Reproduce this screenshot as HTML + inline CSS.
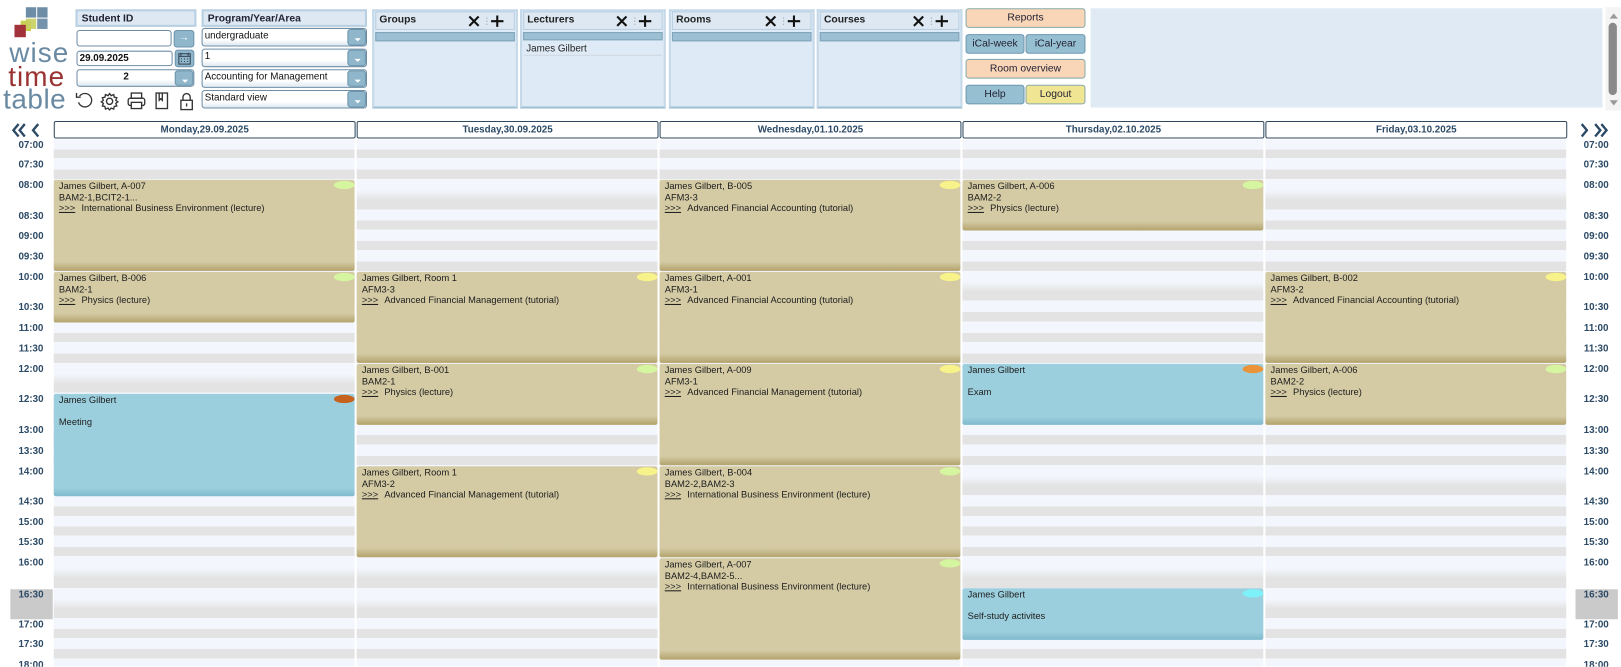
<!DOCTYPE html>
<html><head><meta charset="utf-8">
<style>
*{box-sizing:border-box;margin:0;padding:0}
html,body{width:1621px;height:667px;overflow:hidden;background:#fff}
#w{position:absolute;left:0;top:0;width:1568px;height:645px;overflow:hidden;transform:scale(1.03380);transform-origin:0 0;font-family:"Liberation Sans",Arial,sans-serif;color:#222}
.a{position:absolute}
.hd{position:absolute;background:#dde8f3;border:2px solid #b8d0e2;font-weight:bold;font-size:10px;padding:2px 4px;color:#223}
.in{position:absolute;background:#fff;border:1px solid #6f8ea6;border-radius:3px;font-size:9.5px;padding:1px 2px;color:#111}
.bt{position:absolute;background:#8fb6ca;border:1px solid #6c95ad;border-radius:3px}
.dd{position:absolute;right:0;top:0;bottom:0;width:18px;background:#8fb6ca;border:1px solid #6c95ad;border-radius:3px}
.dd:after{content:"";position:absolute;left:6px;top:8px;border-left:3px solid transparent;border-right:3px solid transparent;border-top:3px solid #fff}
.pn{position:absolute;top:9px;width:141px;height:96px;background:#deeaf5;border:2px solid #c5d9e8;border-bottom-color:#9fc0d3}
.pn .t{position:absolute;left:1px;top:0;right:1px;height:18px;border:1px solid #b8d0e2;background:#dde8f3;font-weight:bold;font-size:10px;padding:2px 3px}
.pn svg{position:absolute;right:3px;top:2px}
.pn .bar{position:absolute;left:1px;right:1px;top:20px;height:9px;background:#9cbfd3;border:1px solid #7fa4bb}
.b2{position:absolute;border:1px solid #8aa;border-radius:3px;font-size:10px;text-align:center;line-height:17px;color:#223}
.dh{position:absolute;top:117px;height:17px;background:#fff;border:1px solid #2f4a60;border-radius:2px;font-size:9.5px;font-weight:bold;color:#2c4a66;text-align:center;line-height:15px}
.tl{position:absolute;width:40px;text-align:center;font-size:9.5px;font-weight:bold;color:#2c4a66}
.r{position:absolute;left:52px;width:1463px}
.r20{background:linear-gradient(#f3f7fd 0 50%,#e3e3e3 50% 95%,#f3f7fd 95%)}
.r30{background:linear-gradient(#f3f7fd 0 33%,#e3e3e3 66%,#e3e3e3 96%,#f3f7fd 96%)}
.vl{position:absolute;top:135px;height:510px;width:2px;background:#fff}
.e{position:absolute;width:291px;background:linear-gradient(#d4cba5 0,#d4cba5 calc(100% - 9px),#b3a36c 100%);font-size:9px;line-height:10.5px;padding:1px 5px;color:#1c1c1c;border-radius:2px}
.e.b{background:linear-gradient(#9ccfdd 0,#9ccfdd calc(100% - 8px),#7fb9cc 100%)}
.e i{font-style:normal;text-decoration:underline;margin-right:6px}
.e .d{position:absolute;right:0;top:1px;width:20px;height:8px;border-radius:50%}
</style></head><body><div id="w">

<!-- logo -->
<div class="a" style="left:25px;top:7px;width:10px;height:10px;background:#6d8ca6"></div>
<div class="a" style="left:36px;top:7px;width:10px;height:10px;background:#6d8ca6"></div>
<div class="a" style="left:36px;top:18px;width:10px;height:10px;background:#7593ad"></div>
<div class="a" style="left:20px;top:20px;width:10px;height:10px;background:#c9cf4e"></div>
<div class="a" style="left:25px;top:18px;width:10px;height:10px;background:#c6cf60;opacity:.9"></div>
<div class="a" style="left:14px;top:24px;width:11px;height:12px;background:#a3333a"></div>
<div class="a" style="left:9px;top:39px;font-size:27px;line-height:24px;color:#6a8aa3;letter-spacing:1px">wise</div>
<div class="a" style="left:8px;top:62px;font-size:27px;line-height:24px;color:#9a3232;letter-spacing:1px">time</div>
<div class="a" style="left:3px;top:84px;font-size:27px;line-height:24px;color:#6a8aa3;letter-spacing:0.5px">table</div>

<!-- student -->
<div class="hd" style="left:73px;top:9px;width:117px;height:17px">Student ID</div>
<div class="in" style="left:74px;top:29px;width:92px;height:16px"></div>
<div class="bt" style="left:168px;top:29px;width:20px;height:17px;color:#fff;font-size:10px;text-align:center;line-height:14px">&#8594;</div>
<div class="in" style="left:74px;top:49px;width:93px;height:15px;font-weight:bold;line-height:11px">29.09.2025</div>
<div class="bt" style="left:169px;top:48px;width:19px;height:17px"><svg width="17" height="15" viewBox="0 0 17 15"><rect x="3" y="3" width="11" height="10" fill="none" stroke="#345" stroke-width="1"/><path d="M3 5.5h11M5 2v3M12 2v3M5 8h1M8 8h1M11 8h1M5 10.5h1M8 10.5h1M11 10.5h1" stroke="#345"/></svg></div>
<div class="in" style="left:74px;top:67px;width:114px;height:17px;font-weight:bold;text-align:center;padding-right:20px;background:linear-gradient(#fff 60%,#dde8f0)">2<div class="dd"></div></div>
<svg class="a" style="left:72px;top:87px" width="120" height="20" viewBox="0 0 120 20" fill="none" stroke="#333" stroke-width="1.3">
<path d="M5 6a6.5 6.5 0 1 1 -1 6"/><path d="M2 3v4h4"/>
<circle cx="34" cy="11" r="3"/><path d="M34 3.5l1.5 2 2.5-1 .5 2.5 2.5.5-1 2.5 2 1.5-2 1.5 1 2.5-2.5.5-.5 2.5-2.5-1-1.5 2-1.5-2-2.5 1-.5-2.5-2.5-.5 1-2.5-2-1.5 2-1.5-1-2.5 2.5-.5.5-2.5 2.5 1z"/>
<rect x="55" y="3" width="10" height="5"/><rect x="52" y="8" width="16" height="7" rx="2"/><rect x="55" y="12" width="10" height="6" fill="#fff"/>
<rect x="79" y="3" width="11" height="15"/><path d="M82 3v7l1.5-1.5L85 10V3"/>
<rect x="103" y="10" width="11" height="9"/><path d="M105 10V7a3.5 3.5 0 0 1 7 0v3M108.5 13v3"/>
</svg>

<!-- program -->
<div class="hd" style="left:195px;top:9px;width:160px;height:17px">Program/Year/Area</div>
<div class="in" style="left:195px;top:27px;width:160px;height:18px;padding-right:20px;line-height:12px;background:linear-gradient(#fff 65%,#dde8f0)">undergraduate<div class="dd"></div></div>
<div class="in" style="left:195px;top:47px;width:160px;height:18px;line-height:12px;background:linear-gradient(#fff 65%,#dde8f0)">1<div class="dd"></div></div>
<div class="in" style="left:195px;top:67px;width:160px;height:18px;line-height:12px;background:linear-gradient(#fff 65%,#dde8f0)">Accounting for Management<div class="dd"></div></div>
<div class="in" style="left:195px;top:87px;width:160px;height:18px;line-height:12px;background:linear-gradient(#fff 65%,#dde8f0)">Standard view<div class="dd"></div></div>

<!-- panels -->
<div class="pn" style="left:360px"><div class="t">Groups<svg width="42" height="13" viewBox="0 0 42 13" stroke="#111" stroke-width="2"><path d="M2 2l9 9M11 2l-9 9M29 1v11M23 6.5h12"/><path d="M19 3v1M19 6v1M19 9v1" stroke="#999" stroke-width="1"/></svg></div><div class="bar"></div></div>
<div class="pn" style="left:503px"><div class="t">Lecturers<svg width="42" height="13" viewBox="0 0 42 13" stroke="#111" stroke-width="2"><path d="M2 2l9 9M11 2l-9 9M29 1v11M23 6.5h12"/><path d="M19 3v1M19 6v1M19 9v1" stroke="#999" stroke-width="1"/></svg></div><div class="bar" style="height:8px"></div><div class="a" style="left:2px;top:30px;right:2px;height:13px;border-bottom:1px solid #cfd8df;font-size:9.5px;padding:1px 2px">James Gilbert</div></div>
<div class="pn" style="left:647px"><div class="t">Rooms<svg width="42" height="13" viewBox="0 0 42 13" stroke="#111" stroke-width="2"><path d="M2 2l9 9M11 2l-9 9M29 1v11M23 6.5h12"/><path d="M19 3v1M19 6v1M19 9v1" stroke="#999" stroke-width="1"/></svg></div><div class="bar"></div></div>
<div class="pn" style="left:790px"><div class="t">Courses<svg width="42" height="13" viewBox="0 0 42 13" stroke="#111" stroke-width="2"><path d="M2 2l9 9M11 2l-9 9M29 1v11M23 6.5h12"/><path d="M19 3v1M19 6v1M19 9v1" stroke="#999" stroke-width="1"/></svg></div><div class="bar"></div></div>

<!-- buttons -->
<div class="b2" style="left:934px;top:8px;width:116px;height:19px;background:#fad6b8">Reports</div>
<div class="b2" style="left:934px;top:33px;width:57px;height:19px;background:#97bfd2;border-color:#6d97ae">iCal-week</div>
<div class="b2" style="left:992px;top:33px;width:58px;height:19px;background:#97bfd2;border-color:#6d97ae">iCal-year</div>
<div class="b2" style="left:934px;top:57px;width:116px;height:19px;background:#fad6b8">Room overview</div>
<div class="b2" style="left:934px;top:82px;width:57px;height:19px;background:#97bfd2;border-color:#6d97ae">Help</div>
<div class="b2" style="left:992px;top:82px;width:58px;height:19px;background:#f0e592">Logout</div>
<div class="a" style="left:1055px;top:8px;width:495px;height:96px;background:#dfeaf4"></div>
<div class="a" style="left:1553px;top:7px;width:15px;height:100px;background:#f4f4f4"></div>
<div class="a" style="left:1556px;top:22px;width:8px;height:70px;background:#8a8a8a;border-radius:4px"></div>
<div class="a" style="left:1557px;top:13px;border-left:4px solid transparent;border-right:4px solid transparent;border-bottom:5px solid #999"></div>
<div class="a" style="left:1557px;top:97px;border-left:4px solid transparent;border-right:4px solid transparent;border-top:5px solid #999"></div>

<!-- nav -->
<svg class="a" style="left:11px;top:119px" width="30" height="14" viewBox="0 0 30 14" fill="none" stroke="#2c4a66" stroke-width="2.3"><path d="M7 1L2 7l5 6M13 1L8 7l5 6M26 1l-5 6 5 6"/></svg>
<svg class="a" style="left:1527px;top:119px" width="30" height="14" viewBox="0 0 30 14" fill="none" stroke="#2c4a66" stroke-width="2.3"><path d="M3 1l5 6-5 6M16 1l5 6-5 6M22 1l5 6-5 6"/></svg>

<div class="dh" style="left:52px;width:292px">Monday,29.09.2025</div>
<div class="dh" style="left:345px;width:292px">Tuesday,30.09.2025</div>
<div class="dh" style="left:638px;width:292px">Wednesday,01.10.2025</div>
<div class="dh" style="left:931px;width:292px">Thursday,02.10.2025</div>
<div class="dh" style="left:1224px;width:292px">Friday,03.10.2025</div>

<!-- grid rows -->
<div class="r r20" style="top:135px;height:19px"></div>
<div class="r r20" style="top:154px;height:20px"></div>
<div class="r r30" style="top:174px;height:30px"></div>
<div class="r r20" style="top:204px;height:19px"></div>
<div class="r r20" style="top:223px;height:20px"></div>
<div class="r r20" style="top:243px;height:20px"></div>
<div class="r r30" style="top:263px;height:29px"></div>
<div class="r r20" style="top:292px;height:20px"></div>
<div class="r r20" style="top:312px;height:20px"></div>
<div class="r r20" style="top:332px;height:20px"></div>
<div class="r r30" style="top:352px;height:29px"></div>
<div class="r r30" style="top:381px;height:30px"></div>
<div class="r r20" style="top:411px;height:20px"></div>
<div class="r r20" style="top:431px;height:20px"></div>
<div class="r r30" style="top:451px;height:29px"></div>
<div class="r r20" style="top:480px;height:20px"></div>
<div class="r r20" style="top:500px;height:19px"></div>
<div class="r r20" style="top:519px;height:20px"></div>
<div class="r r30" style="top:539px;height:31px"></div>
<div class="r r30" style="top:570px;height:29px"></div>
<div class="r r20" style="top:599px;height:19px"></div>
<div class="r r20" style="top:618px;height:20px"></div>
<div class="r" style="top:638px;height:7px;background:#f3f7fd"></div>
<div class="vl" style="left:343px"></div><div class="vl" style="left:636px"></div><div class="vl" style="left:929px"></div><div class="vl" style="left:1222px"></div>

<!-- time labels -->
<div class="a" style="left:10px;top:570px;width:41px;height:29px;background:#cacaca"></div>
<div class="a" style="left:1524px;top:570px;width:41px;height:29px;background:#cacaca"></div>
<div style="position:absolute;left:10px;top:0">
<div class="tl" style="top:135px">07:00</div><div class="tl" style="top:154px">07:30</div><div class="tl" style="top:174px">08:00</div><div class="tl" style="top:204px">08:30</div><div class="tl" style="top:223px">09:00</div><div class="tl" style="top:243px">09:30</div><div class="tl" style="top:263px">10:00</div><div class="tl" style="top:292px">10:30</div><div class="tl" style="top:312px">11:00</div><div class="tl" style="top:332px">11:30</div><div class="tl" style="top:352px">12:00</div><div class="tl" style="top:381px">12:30</div><div class="tl" style="top:411px">13:00</div><div class="tl" style="top:431px">13:30</div><div class="tl" style="top:451px">14:00</div><div class="tl" style="top:480px">14:30</div><div class="tl" style="top:500px">15:00</div><div class="tl" style="top:519px">15:30</div><div class="tl" style="top:539px">16:00</div><div class="tl" style="top:570px">16:30</div><div class="tl" style="top:599px">17:00</div><div class="tl" style="top:618px">17:30</div><div class="tl" style="top:638px">18:00</div>
</div>
<div style="position:absolute;left:1524px;top:0">
<div class="tl" style="top:135px">07:00</div><div class="tl" style="top:154px">07:30</div><div class="tl" style="top:174px">08:00</div><div class="tl" style="top:204px">08:30</div><div class="tl" style="top:223px">09:00</div><div class="tl" style="top:243px">09:30</div><div class="tl" style="top:263px">10:00</div><div class="tl" style="top:292px">10:30</div><div class="tl" style="top:312px">11:00</div><div class="tl" style="top:332px">11:30</div><div class="tl" style="top:352px">12:00</div><div class="tl" style="top:381px">12:30</div><div class="tl" style="top:411px">13:00</div><div class="tl" style="top:431px">13:30</div><div class="tl" style="top:451px">14:00</div><div class="tl" style="top:480px">14:30</div><div class="tl" style="top:500px">15:00</div><div class="tl" style="top:519px">15:30</div><div class="tl" style="top:539px">16:00</div><div class="tl" style="top:570px">16:30</div><div class="tl" style="top:599px">17:00</div><div class="tl" style="top:618px">17:30</div><div class="tl" style="top:638px">18:00</div>
</div>

<!-- events Monday -->
<div class="e" style="left:52px;top:174px;height:88px"><div class="d" style="background:#d6f5a0"></div>James Gilbert, A-007<br>BAM2-1,BCIT2-1...<br><i>&gt;&gt;&gt;</i>International Business Environment (lecture)</div>
<div class="e" style="left:52px;top:263px;height:49px"><div class="d" style="background:#d6f5a0"></div>James Gilbert, B-006<br>BAM2-1<br><i>&gt;&gt;&gt;</i>Physics (lecture)</div>
<div class="e b" style="left:52px;top:381px;height:99px"><div class="d" style="background:#c6621e"></div>James Gilbert<br><br>Meeting</div>
<!-- Tuesday -->
<div class="e" style="left:345px;top:263px;height:88px"><div class="d" style="background:#f7f28a"></div>James Gilbert, Room 1<br>AFM3-3<br><i>&gt;&gt;&gt;</i>Advanced Financial Management (tutorial)</div>
<div class="e" style="left:345px;top:352px;height:59px"><div class="d" style="background:#d6f5a0"></div>James Gilbert, B-001<br>BAM2-1<br><i>&gt;&gt;&gt;</i>Physics (lecture)</div>
<div class="e" style="left:345px;top:451px;height:88px"><div class="d" style="background:#f7f28a"></div>James Gilbert, Room 1<br>AFM3-2<br><i>&gt;&gt;&gt;</i>Advanced Financial Management (tutorial)</div>
<!-- Wednesday -->
<div class="e" style="left:638px;top:174px;height:88px"><div class="d" style="background:#f7f28a"></div>James Gilbert, B-005<br>AFM3-3<br><i>&gt;&gt;&gt;</i>Advanced Financial Accounting (tutorial)</div>
<div class="e" style="left:638px;top:263px;height:88px"><div class="d" style="background:#f7f28a"></div>James Gilbert, A-001<br>AFM3-1<br><i>&gt;&gt;&gt;</i>Advanced Financial Accounting (tutorial)</div>
<div class="e" style="left:638px;top:352px;height:98px"><div class="d" style="background:#f7f28a"></div>James Gilbert, A-009<br>AFM3-1<br><i>&gt;&gt;&gt;</i>Advanced Financial Management (tutorial)</div>
<div class="e" style="left:638px;top:451px;height:88px"><div class="d" style="background:#d6f5a0"></div>James Gilbert, B-004<br>BAM2-2,BAM2-3<br><i>&gt;&gt;&gt;</i>International Business Environment (lecture)</div>
<div class="e" style="left:638px;top:540px;height:98px"><div class="d" style="background:#d6f5a0"></div>James Gilbert, A-007<br>BAM2-4,BAM2-5...<br><i>&gt;&gt;&gt;</i>International Business Environment (lecture)</div>
<!-- Thursday -->
<div class="e" style="left:931px;top:174px;height:49px"><div class="d" style="background:#d6f5a0"></div>James Gilbert, A-006<br>BAM2-2<br><i>&gt;&gt;&gt;</i>Physics (lecture)</div>
<div class="e b" style="left:931px;top:352px;height:59px"><div class="d" style="background:#ea9338"></div>James Gilbert<br><br>Exam</div>
<div class="e b" style="left:931px;top:569px;height:50px"><div class="d" style="background:#7ef0f7"></div>James Gilbert<br><br>Self-study activites</div>
<!-- Friday -->
<div class="e" style="left:1224px;top:263px;height:88px"><div class="d" style="background:#f7f28a"></div>James Gilbert, B-002<br>AFM3-2<br><i>&gt;&gt;&gt;</i>Advanced Financial Accounting (tutorial)</div>
<div class="e" style="left:1224px;top:352px;height:59px"><div class="d" style="background:#d6f5a0"></div>James Gilbert, A-006<br>BAM2-2<br><i>&gt;&gt;&gt;</i>Physics (lecture)</div>

</div></body></html>
